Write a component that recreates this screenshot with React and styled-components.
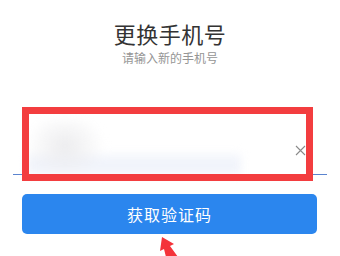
import React from "react";
import styled, { createGlobalStyle } from "styled-components";

const GlobalStyle = createGlobalStyle`
  html, body {
    margin: 0;
    padding: 0;
    background: #fff;
    font-family: "Noto Sans CJK SC", "Noto Sans", sans-serif;
  }
`;

const Page = styled.div`
  position: relative;
  width: 340px;
  height: 256px;
  overflow: hidden;
  display: flex;
  flex-direction: column;
  align-items: center;
  padding-top: 18px;
  box-sizing: border-box;
`;

const Title = styled.h1`
  margin: 0;
  font-size: 22px;
  line-height: 30px;
  font-weight: 400;
  color: #333;
  letter-spacing: 0.5px;
`;

const Subtitle = styled.p`
  margin: 2px 0 0;
  font-size: 12px;
  line-height: 16px;
  color: #959595;
`;

const Field = styled.div`
  position: relative;
  align-self: stretch;
  margin: 58px 13px 0;
  height: 50px;
  border-bottom: 1px solid #5b84cf;
  display: flex;
  align-items: center;
  justify-content: flex-end;
  padding-right: 21px;
`;

const Redacted = styled.div`
  position: absolute;
  left: 14px;
  top: -4px;
  width: 214px;
  height: 54px;
  background:
    radial-gradient(ellipse 40px 34px at 38px 26px, #ececee 0%, rgba(245, 245, 246, 0) 100%),
    linear-gradient(180deg, rgba(255, 255, 255, 0) 58%, #f1f4fb 72%, #f1f4fb 100%);
  filter: blur(4px);
`;

const ClearIcon = styled.svg`
  width: 11px;
  height: 11px;
  margin-top: 2px;
`;

const Highlight = styled.div`
  position: absolute;
  left: 9px;
  top: -17px;
  width: 291px;
  height: 74px;
  border: 7px solid #f33d3f;
  box-sizing: border-box;
  pointer-events: none;
`;

const SubmitButton = styled.button`
  align-self: stretch;
  margin: 19px 23px 0 22px;
  height: 40px;
  border: none;
  border-radius: 5px;
  background: #2b86ee;
  color: #fff;
  font-family: inherit;
  font-size: 16px;
  letter-spacing: 1px;
`;

const Pointer = styled.svg`
  position: absolute;
  left: 152px;
  top: 235px;
  width: 30px;
  height: 22px;
`;

export default function App() {
  return (
    <>
      <GlobalStyle />
      <Page>
        <Title>更换手机号</Title>
        <Subtitle>请输入新的手机号</Subtitle>
        <Field>
          <Redacted />
          <ClearIcon viewBox="0 0 11 11">
            <path d="M1 1L10 10M10 1L1 10" stroke="#8a8a8a" strokeWidth="1.1" fill="none" />
          </ClearIcon>
          <Highlight />
        </Field>
        <SubmitButton>获取验证码</SubmitButton>
        <Pointer viewBox="0 0 30 22">
          <polygon points="10,2 22,9 18,11 26,22 14,22 12,14 8,16" fill="#f4333a" />
        </Pointer>
      </Page>
    </>
  );
}
